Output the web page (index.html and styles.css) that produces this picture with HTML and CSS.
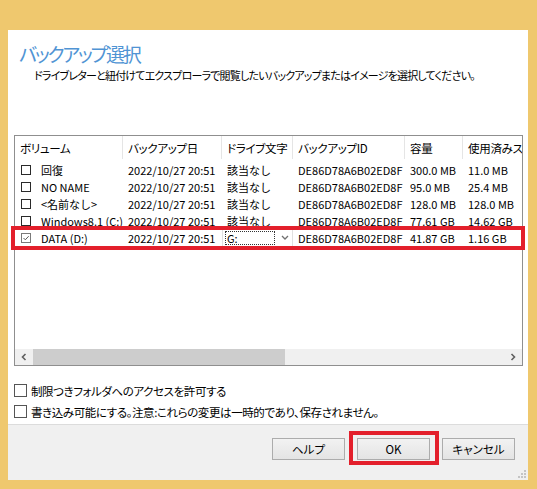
FILE: index.html
```html
<!DOCTYPE html>
<html>
<head>
    <meta charset="utf-8">
    <title>バックアップ選択</title>
    <link rel="stylesheet" href="styles.css">
</head>
<body>
    <div class="window">
        <div class="main">
            <h1 class="title">バックアップ選択</h1>
            <p class="lead">ドライブレターと紐付けてエクスプローラで閲覧したいバックアップまたはイメージを選択してください。</p>

            <div class="list">
                <div class="table">
                    <div class="row head">
                        <span>ボリューム</span>
                        <span>バックアップ日</span>
                        <span>ドライブ文字</span>
                        <span>バックアップID</span>
                        <span>容量</span>
                        <span>使用済みスペース</span>
                    </div>
                    <div class="rows">
                        <div class="row">
                            <span class="vol"><i class="box"></i>回復</span>
                            <span>2022/10/27 20:51</span>
                            <span>該当なし</span>
                            <span>DE86D78A6B02ED8F</span>
                            <span>300.0 MB</span>
                            <span>11.0 MB</span>
                        </div>
                        <div class="row">
                            <span class="vol"><i class="box"></i>NO NAME</span>
                            <span>2022/10/27 20:51</span>
                            <span>該当なし</span>
                            <span>DE86D78A6B02ED8F</span>
                            <span>95.0 MB</span>
                            <span>25.4 MB</span>
                        </div>
                        <div class="row">
                            <span class="vol"><i class="box"></i>&lt;名前なし&gt;</span>
                            <span>2022/10/27 20:51</span>
                            <span>該当なし</span>
                            <span>DE86D78A6B02ED8F</span>
                            <span>128.0 MB</span>
                            <span>128.0 MB</span>
                        </div>
                        <div class="row">
                            <span class="vol"><i class="box"></i>Windows8.1 (C:)</span>
                            <span>2022/10/27 20:51</span>
                            <span>該当なし</span>
                            <span>DE86D78A6B02ED8F</span>
                            <span>77.61 GB</span>
                            <span>14.62 GB</span>
                        </div>
                        <div class="row">
                            <span class="vol">
                                <svg class="box checked" width="10" height="10" viewBox="0 0 10 10">
                                    <rect x="0.5" y="0.5" width="9" height="9" fill="#fff" stroke="#7a7a7a"/>
                                    <path d="M2.5 5l1.8 1.8 3.4-3.6" fill="none" stroke="#5a5a5a" stroke-width="1"/>
                                </svg>DATA (D:)</span>
                            <span>2022/10/27 20:51</span>
                            <span class="combo">
                                <span class="focus">G:</span>
                                <svg width="8" height="6" viewBox="0 0 8 6"><path d="M1 1l3 3 3-3" fill="none" stroke="#707070" stroke-width="1.3"/></svg>
                            </span>
                            <span>DE86D78A6B02ED8F</span>
                            <span>41.87 GB</span>
                            <span>1.16 GB</span>
                        </div>
                    </div>
                </div>
                <div class="hscroll">
                    <span class="arrow">
                        <svg width="6" height="8" viewBox="0 0 6 8"><path d="M4.5 1L1.5 4l3 3" fill="none" stroke="#606060" stroke-width="1.6"/></svg>
                    </span>
                    <span class="thumb"></span>
                    <span class="track"></span>
                    <span class="arrow">
                        <svg width="6" height="8" viewBox="0 0 6 8"><path d="M1.5 1l3 3-3 3" fill="none" stroke="#606060" stroke-width="1.6"/></svg>
                    </span>
                </div>
            </div>

            <div class="opts">
                <div class="opt"><span class="check"></span>制限つきフォルダへのアクセスを許可する</div>
                <div class="opt"><span class="check"></span>書き込み可能にする。注意:これらの変更は一時的であり、保存されません。</div>
            </div>

            <div class="mark mark-row"></div>
        </div>

        <div class="footer">
            <button class="btn">ヘルプ</button>
            <button class="btn ok">OK</button>
            <button class="btn">キャンセル</button>
            <svg class="grip" width="8" height="8" viewBox="0 0 8 8">
                <rect x="6" y="0" width="2" height="2" fill="#c4c4c4"/>
                <rect x="3" y="3" width="2" height="2" fill="#c4c4c4"/>
                <rect x="6" y="3" width="2" height="2" fill="#c4c4c4"/>
                <rect x="0" y="6" width="2" height="2" fill="#c4c4c4"/>
                <rect x="3" y="6" width="2" height="2" fill="#c4c4c4"/>
                <rect x="6" y="6" width="2" height="2" fill="#c4c4c4"/>
            </svg>
        </div>
    </div>
</body>
</html>
```

FILE: styles.css
```css
body {
    margin: 0;
    height: 489px;
    background: #efc86e;
    font-family: "Noto Sans CJK JP", sans-serif;
    font-size: 12px;
    color: #000;
    overflow: hidden;
}
.window {
    margin: 30px 9px 9px 8px;
    height: 450px;
    background: #fff;
    display: flex;
    flex-direction: column;
}
.main {
    flex: 1;
    position: relative;
}
.title {
    margin: 0;
    padding: 12px 0 0 11px;
    font-size: 19px;
    font-weight: normal;
    line-height: 24px;
    letter-spacing: -2.2px;
    color: #5094d4;
    font-feature-settings: "palt";
}
.lead {
    margin: 1px 0 0 26px;
    font-size: 11px;
    line-height: 16px;
    font-feature-settings: "palt";
    letter-spacing: -0.8px;
    white-space: nowrap;
}
.list {
    margin: 52px 5px 0 6px;
    border: 1px solid #8f8f8f;
    font-size: 11px;
}
.table {
    height: 213px;
    overflow: hidden;
}
.row {
    display: grid;
    grid-template-columns: 108px 99px 71px 112px 58px 100px;
    height: 17px;
    align-items: center;
    white-space: nowrap;
}
.row span {
    padding-left: 5px;
}
.head {
    height: 23px;
    align-items: stretch;
}
.head span {
    display: flex;
    align-items: center;
    border-right: 1px solid #e5e5e5;
    font-size: 11.5px;
    letter-spacing: -0.3px;
    font-feature-settings: "palt";
}
.rows {
    padding-top: 2px;
}
.row .vol {
    display: flex;
    align-items: center;
    padding-left: 6px;
}
.box {
    width: 10px;
    height: 10px;
    border: 1px solid #2a2a2a;
    box-sizing: border-box;
    margin-right: 10px;
    flex: none;
}
.box.checked {
    border: none;
}
.row .combo {
    display: flex;
    align-items: center;
    justify-content: space-between;
    height: 17px;
    padding: 0 3px 0 3px;
    border-left: 1px solid #e0e0e0;
    border-right: 1px solid #e0e0e0;
    box-sizing: border-box;
}
.row .combo .focus {
    width: 47px;
    height: 12px;
    line-height: 12px;
    padding-left: 1px;
    outline: 1px dotted #333;
}
.hscroll {
    height: 16px;
    display: flex;
    background: #f0f0f0;
}
.arrow {
    width: 18px;
    display: flex;
    align-items: center;
    justify-content: center;
}
.thumb {
    width: 252px;
    background: #cdcdcd;
}
.track {
    flex: 1;
}
.opts {
    margin-top: 14px;
}
.opt {
    display: flex;
    align-items: center;
    gap: 4px;
    height: 21px;
    padding-left: 6px;
    font-size: 11.5px;
    letter-spacing: -0.4px;
    font-feature-settings: "palt";
}
.check {
    width: 13px;
    height: 13px;
    border: 1px solid #555;
    box-sizing: border-box;
    background: #fff;
    flex: none;
}
.mark {
    border: 4px solid #e31f2b;
    box-sizing: border-box;
}
.mark-row {
    position: absolute;
    left: 3px;
    top: 196px;
    width: 514px;
    height: 24px;
}
.footer {
    position: relative;
    height: 42px;
    border-top: 1px solid #dcdcdc;
    background: #f0f0f0;
    display: flex;
    justify-content: flex-end;
    gap: 12px;
    padding: 13px 13px 0 0;
    box-sizing: content-box;
}
.btn {
    width: 73px;
    height: 22px;
    padding: 0;
    border: 1px solid #acacac;
    background: linear-gradient(#f2f2f2, #e4e4e4);
    font-family: inherit;
    font-size: 11.5px;
    color: #000;
    font-feature-settings: "palt";
}
.ok {
    position: relative;
}
.ok::after {
    content: "";
    position: absolute;
    left: -9px;
    right: -10px;
    top: -8px;
    bottom: -6px;
    border: 4px solid #e31f2b;
}
.grip {
    position: absolute;
    right: 2px;
    bottom: 2px;
}
```
